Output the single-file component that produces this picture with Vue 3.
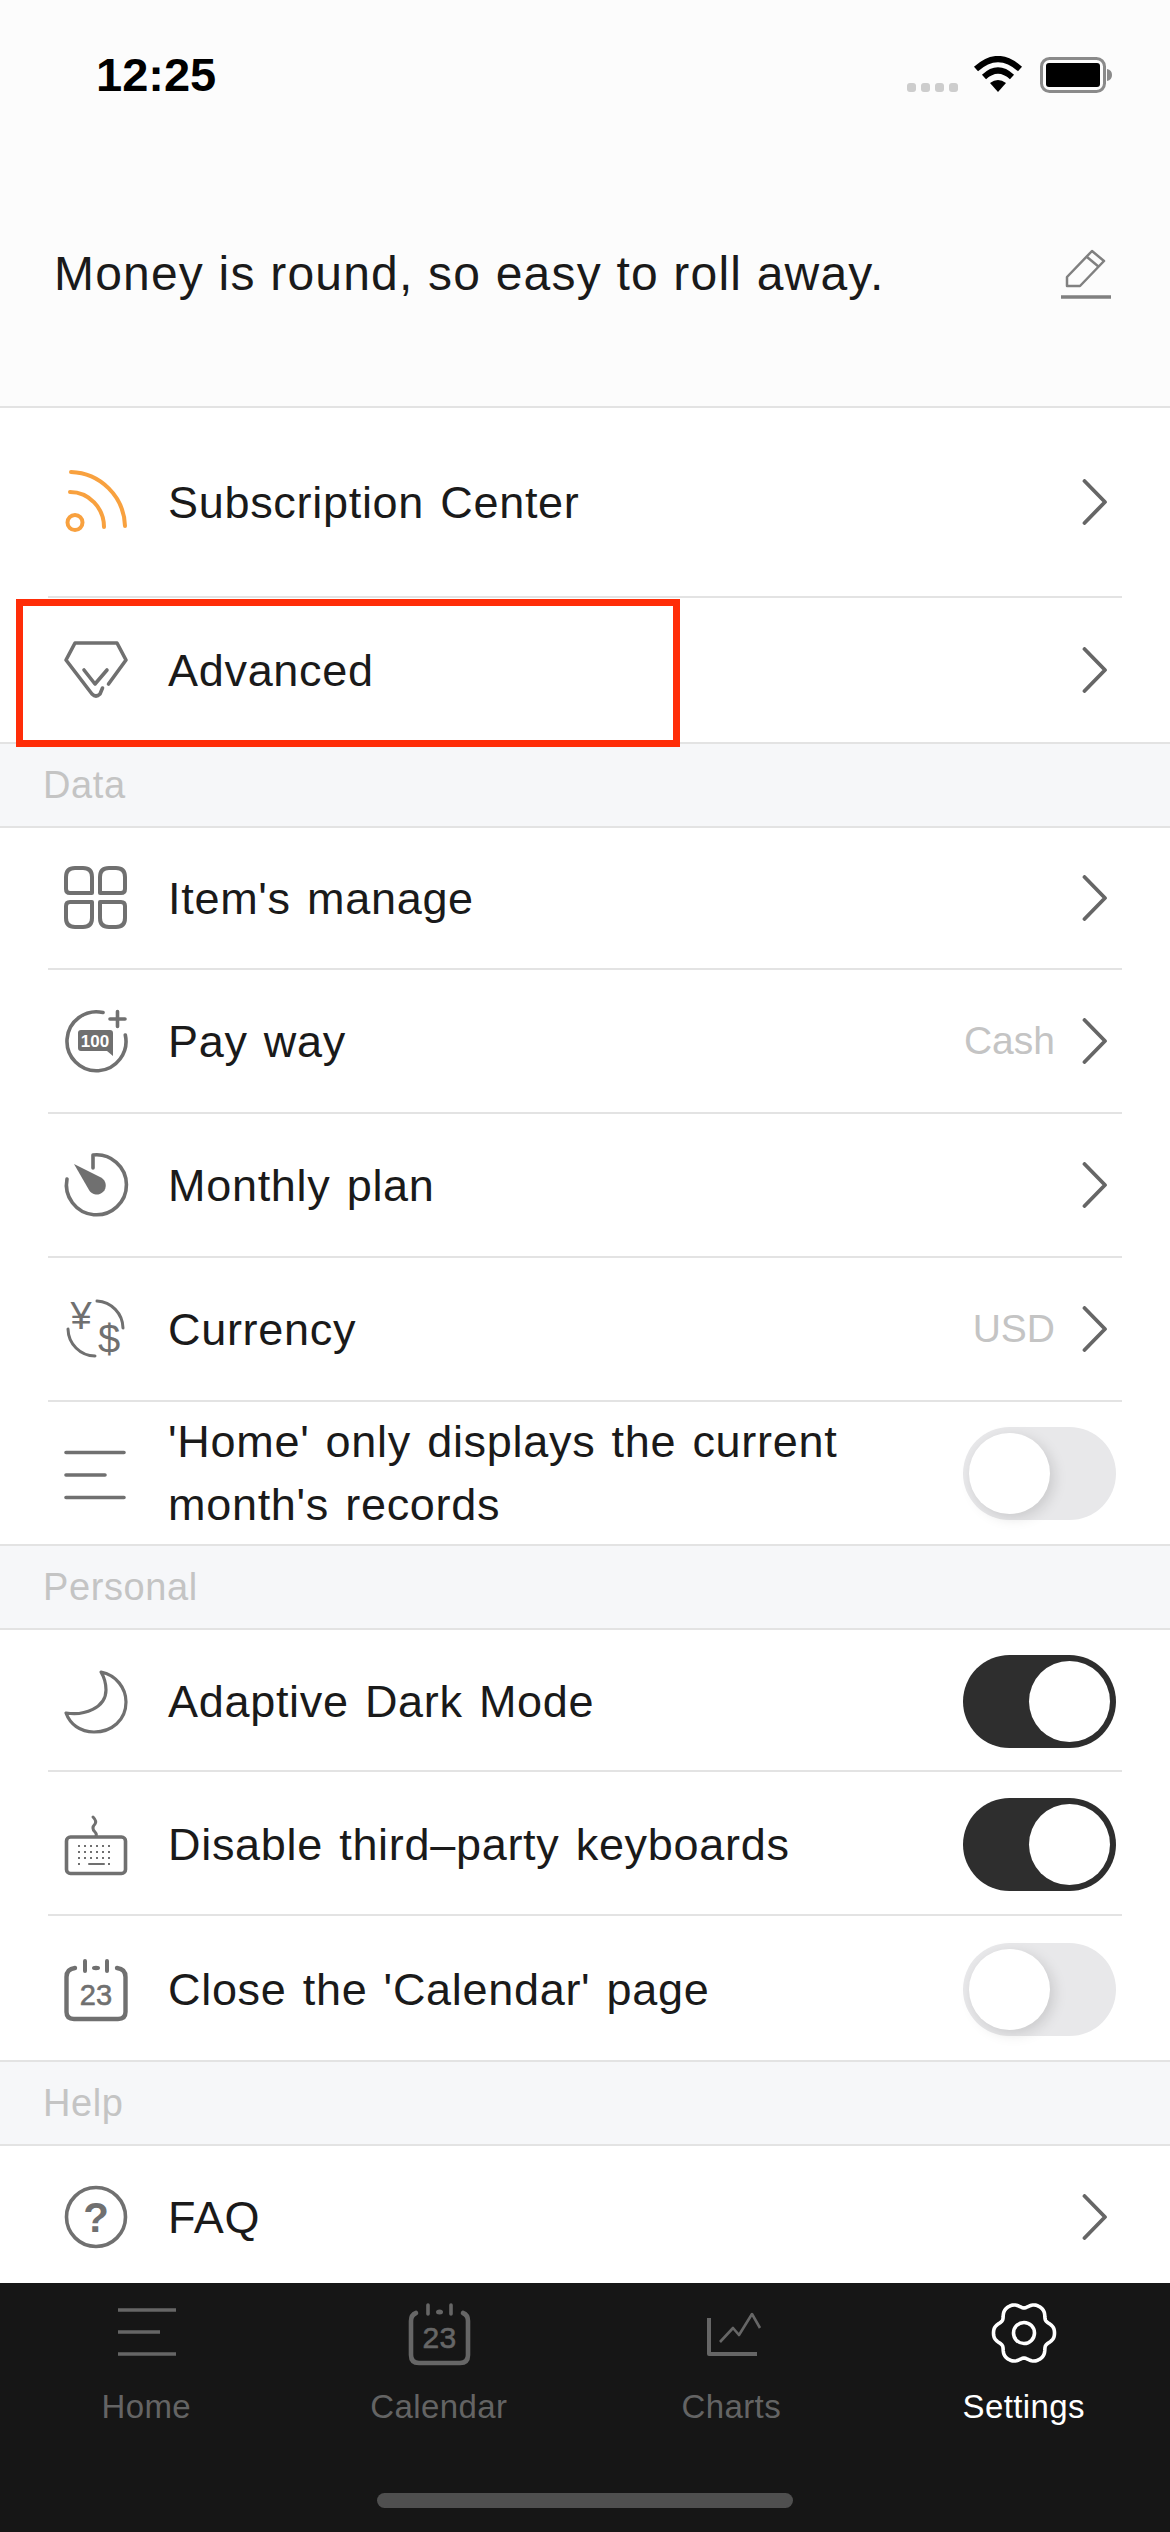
<template>
  <div class="page">
    <header class="top">
      <div class="status">
        <span class="time">12:25</span>
        <div class="status-icons">
          <div class="signal"><i></i><i></i><i></i><i></i></div>
          <svg class="wifi" width="50" height="36" viewBox="0 0 50 36">
            <path d="M3 13 Q25 -7 47 13" fill="none" stroke="#000" stroke-width="6" />
            <path d="M11 21 Q25 8 39 21" fill="none" stroke="#000" stroke-width="6" />
            <path d="M17 27 Q25 21 33 27 L25 36 Z" fill="#000" />
          </svg>
          <svg class="battery" width="74" height="36" viewBox="0 0 74 36">
            <rect x="1.5" y="1.5" width="63" height="33" rx="8" fill="none" stroke="#8a8a8a" stroke-width="3" />
            <rect x="6" y="6" width="54" height="24" rx="3" fill="#000" />
            <path d="M67 12 Q72 13 72 18 Q72 23 67 24 Z" fill="#8a8a8a" />
          </svg>
        </div>
      </div>
      <div class="motto">
        <span>Money is round, so easy to roll away.</span>
        <svg width="50" height="52" viewBox="0 0 50 52" fill="none" stroke="#808080">
          <path d="M6 37 V28 L31 2 L43 12 L19 37 Z" stroke-width="2.5" stroke-linejoin="round" />
          <path d="M26 8 L38 18" stroke-width="2.5" />
          <path d="M0 48 H50" stroke-width="3.5" />
        </svg>
      </div>
    </header>

    <main class="list">
      <section v-for="group in groups" :key="group.title" :class="group.cls">
        <h4 v-if="group.title" class="group-title">{{ group.title }}</h4>
        <div class="group">
          <div
            v-for="row in group.rows"
            :key="row.label"
            class="row"
            :class="row.cls"
          >
            <svg class="icon" width="64" height="64" viewBox="0 0 64 64" fill="none" stroke="#707070" stroke-width="3.6" stroke-linecap="round" stroke-linejoin="round">
              <template v-if="row.icon === 'rss'">
                <g stroke="#f8a13f" stroke-width="4">
                  <circle cx="11" cy="52.5" r="7.5" />
                  <path d="M6 22 C25 22 40 38 40 57" />
                  <path d="M7 2 C36 3 60 26 61 56" />
                </g>
              </template>
              <template v-else-if="row.icon === 'gem'">
                <path d="M44.5 46 L62 22 L53 5 H11 L2 22 L28 56 Q32 60 36 56 L38.5 50" />
                <path d="M20 32 L31 46 L43 32" />
              </template>
              <template v-else-if="row.icon === 'grid'">
                <path d="M11 2 H19 Q28 2 28 11 V27 H6 Q2 27 2 23 V11 Q2 2 11 2 Z" stroke-width="4" />
                <path d="M45 2 H52 Q61 2 61 11 V23 Q61 27 57 27 H36 V11 Q36 2 45 2 Z" stroke-width="4" />
                <path d="M6 36 H28 V52 Q28 61 19 61 H11 Q2 61 2 52 V40 Q2 36 6 36 Z" stroke-width="4" />
                <path d="M36 36 H57 Q61 36 61 40 V52 Q61 61 52 61 H45 Q36 61 36 52 Z" stroke-width="4" />
              </template>
              <template v-else-if="row.icon === 'pay'">
                <path d="M39 3.500 A29.500 29.500 0 1 0 61.300 26" />
                <path d="M46 10 H61 M53.500 2.500 V17.500" />
                <path d="M17 21 H46 Q49 21 49 24 V47 L43 42 H17 Q14 42 14 39 V24 Q14 21 17 21 Z" fill="#707070" stroke="none" />
                <text x="31" y="37.500" class="bill">100</text>
              </template>
              <template v-else-if="row.icon === 'plan'">
                <path d="M29 15 V2 A30 30 0 1 1 3 26" />
                <path d="M10 11 L37 24.500 A9 9 0 1 1 25 37 Z" fill="#707070" stroke="none" />
              </template>
              <template v-else-if="row.icon === 'currency'">
                <path d="M33 4 A27.500 27.500 0 0 1 59 31" stroke-width="3" />
                <path d="M4 32 A27.500 27.500 0 0 0 31 59" stroke-width="3" />
                <text x="17" y="32" class="money">¥</text>
                <text x="45" y="56" class="money big">$</text>
              </template>
              <template v-else-if="row.icon === 'lines'">
                <path d="M2 11.500 H60 M2 34 H41 M2 56.500 H60" />
              </template>
              <template v-else-if="row.icon === 'moon'">
                <path d="M37 2 C52 5 62 18 62 32 C62 50 48 62 30 62 C16 62 6 54 2 43 C20 46 42 38 42 20 C42 13 40 7 37 2 Z" stroke-width="3.2" />
              </template>
              <template v-else-if="row.icon === 'keyboard'">
                <rect x="2.500" y="24" width="59" height="36.500" rx="4" stroke-width="3.6" />
                <path d="M29 4 Q33 8 31 11 Q27 15 31 19 Q33 21 32 23" stroke-width="3" />
                <path d="M14 33 H50 M14 39 H50 M14 45 H50" stroke-width="1.8" stroke-dasharray="2 4" stroke-linecap="butt" />
                <path d="M14 51 H20 M44 51 H50" stroke-width="1.8" stroke-dasharray="2 4" stroke-linecap="butt" />
                <path d="M25 51 H40" stroke-width="2" />
              </template>
              <template v-else-if="row.icon === 'calendar'">
                <path d="M11 10 Q2.500 11 2.500 19 V54 Q2.500 61 10 61 H54 Q61.500 61 61.500 54 V19 Q61.500 11 53 10" stroke-width="4.4" />
                <path d="M21 3 V13 M43 3 V13" stroke-width="4" />
                <ellipse cx="32" cy="10" rx="4" ry="2.200" fill="#707070" stroke="none" />
                <text x="32" y="47" class="day">23</text>
              </template>
              <template v-else-if="row.icon === 'help'">
                <circle cx="32" cy="32" r="29.500" />
                <text x="32" y="47" class="qmark">?</text>
              </template>
            </svg>

            <span class="label">{{ row.label }}</span>
            <span v-if="row.value" class="value">{{ row.value }}</span>

            <div v-if="row.toggle !== undefined" class="toggle" :class="{ on: row.toggle }"><i></i></div>
            <svg v-else class="chevron" width="28" height="46" viewBox="0 0 28 46" fill="none" stroke="#666" stroke-width="3.8" stroke-linecap="round" stroke-linejoin="round">
              <path d="M4.500 2 L25 23 L4.500 44" />
            </svg>

            <div v-if="row.marked" class="mark"></div>
          </div>
        </div>
      </section>
    </main>

    <footer class="tabs">
      <div class="tab-row">
        <div class="tab">
          <svg width="66" height="66" viewBox="0 0 66 66" fill="none" stroke="#666" stroke-width="3.6">
            <path d="M5 10 H63 M5 32 H47 M5 54 H63" />
          </svg>
          <span>Home</span>
        </div>
        <div class="tab">
          <svg width="66" height="66" viewBox="0 0 66 66" fill="none" stroke="#666" stroke-linecap="round" stroke-linejoin="round">
            <path d="M10 13 Q5 15 5 21 V55 Q5 63 13 63 H54 Q62 63 62 55 V21 Q62 15 57 13" stroke-width="4.6" />
            <path d="M22 5 V14 M45 5 V14" stroke-width="3.6" />
            <ellipse cx="33.500" cy="12" rx="3.500" ry="2.500" fill="#666" stroke="none" />
            <text x="33.500" y="48" class="day tab-day">23</text>
          </svg>
          <span>Calendar</span>
        </div>
        <div class="tab">
          <svg width="66" height="66" viewBox="0 0 66 66" fill="none" stroke="#666" stroke-linejoin="round">
            <path d="M11 18 V54 H59" stroke-width="4" />
            <path d="M22 42 L35 28 L41 35 L54 14 L62 28" stroke-width="2.6" />
          </svg>
          <span>Charts</span>
        </div>
        <div class="tab active">
          <svg width="66" height="66" viewBox="0 0 66 66" fill="none" stroke="#fff" stroke-width="3.6">
            <path :d="gearPath" stroke-linejoin="round" />
            <circle cx="33" cy="33" r="10.500" />
          </svg>
          <span>Settings</span>
        </div>
      </div>
      <div class="home-bar"></div>
    </footer>
  </div>
</template>

<script setup>
const groups = [
  {
    title: '',
    rows: [
      { label: 'Subscription Center', icon: 'rss', cls: 'first-row' },
      { label: 'Advanced', icon: 'gem', cls: 'tall', marked: true }
    ]
  },
  {
    title: 'Data',
    rows: [
      { label: "Item's manage", icon: 'grid' },
      { label: 'Pay way', icon: 'pay', value: 'Cash' },
      { label: 'Monthly plan', icon: 'plan' },
      { label: 'Currency', icon: 'currency', value: 'USD' },
      { label: "'Home' only displays the current month's records", icon: 'lines', toggle: false }
    ]
  },
  {
    title: 'Personal',
    cls: 'personal',
    rows: [
      { label: 'Adaptive Dark Mode', icon: 'moon', toggle: true },
      { label: 'Disable third–party keyboards', icon: 'keyboard', toggle: true },
      { label: "Close the 'Calendar' page", icon: 'calendar', toggle: false, cls: 'tall' }
    ]
  },
  {
    title: 'Help',
    rows: [{ label: 'FAQ', icon: 'help' }]
  }
]

// six lobes round the settings gear, the second harmonic sharpens the notches
const points = []
for (let i = 0; i < 144; i++) {
  const a = (i / 144) * Math.PI * 2
  const r = 28.25 + 2.75 * Math.cos(6 * a) - 0.5 * Math.cos(12 * a)
  points.push((33 + r * Math.cos(a)).toFixed(2) + ' ' + (33 + r * Math.sin(a)).toFixed(2))
}
const gearPath = 'M' + points.join(' L') + ' Z'
</script>

<style>
html,
body {
  margin: 0;
  background: #fff;
}
</style>

<style scoped>
.page {
  width: 1170px;
  height: 2532px;
  display: flex;
  flex-direction: column;
  overflow: hidden;
  background: #fff;
  color: #1a1a1a;
  font-family: "Liberation Sans", Arial, sans-serif;
}

.top {
  height: 408px;
  box-sizing: border-box;
  flex: none;
  background: #fcfcfc;
  border-bottom: 2px solid #e3e3e3;
}

.status {
  height: 149px;
  box-sizing: border-box;
  padding: 0 56px 0 96px;
  display: flex;
  align-items: center;
  justify-content: space-between;
}

.time {
  font-size: 47px;
  font-weight: 700;
  color: #000;
}

.status-icons {
  display: flex;
  align-items: center;
  gap: 15px;
}

.signal {
  display: flex;
  gap: 5px;
  align-self: flex-end;
  margin-bottom: 1px;
}

.signal i {
  width: 9px;
  height: 9px;
  border-radius: 3px;
  background: #cdcdcd;
}

.wifi {
  margin-top: -2px;
}

.battery {
  margin-left: 2px;
}

.motto {
  height: 252px;
  padding: 0 59px 0 54px;
  display: flex;
  align-items: center;
  justify-content: space-between;
  font-size: 48px;
  letter-spacing: 1.2px;
}

.motto span {
  padding-bottom: 4px;
}

.list {
  flex: 1;
  min-height: 0;
  overflow: hidden;
}

.group-title {
  height: 86px;
  box-sizing: border-box;
  margin: 0;
  padding-left: 43px;
  background: #f6f7f9;
  border-top: 2px solid #e3e3e3;
  border-bottom: 2px solid #e3e3e3;
  display: flex;
  align-items: center;
  font-size: 38px;
  font-weight: 400;
  letter-spacing: 0.6px;
  color: #c4c4c4;
}

.row {
  position: relative;
  height: 144px;
  box-sizing: border-box;
  margin: 0 48px;
  padding: 0 6px 0 16px;
  display: flex;
  align-items: center;
  border-bottom: 2px solid #e3e3e3;
}

.row:first-child {
  height: 142px;
}

.row:last-child {
  height: 142px;
  border-bottom: none;
}

.row.first-row {
  height: 190px;
}

.row.tall {
  height: 144px;
}

.personal .row {
  padding-top: 3px;
}

.icon {
  flex: none;
  margin-right: 40px;
  overflow: visible;
}

.label {
  flex: 1;
  min-width: 0;
  font-size: 45px;
  line-height: 63px;
  letter-spacing: 0.7px;
  word-spacing: 3px;
  padding-right: 70px;
}

.value {
  font-size: 39px;
  color: #c4c4c4;
  margin-right: 25px;
}

.chevron {
  flex: none;
  margin-right: 8px;
}

.toggle {
  flex: none;
  width: 153px;
  height: 93px;
  box-sizing: border-box;
  padding: 6px;
  border-radius: 47px;
  background: #e8e8ea;
}

.toggle i {
  display: block;
  width: 81px;
  height: 81px;
  border-radius: 50%;
  background: #fff;
  box-shadow: 4px 4px 14px rgba(0, 0, 0, 0.13);
}

.toggle.on {
  display: flex;
  justify-content: flex-end;
  background: #2e2e2e;
}

.toggle.on i {
  box-shadow: none;
}

.mark {
  position: absolute;
  left: -32px;
  top: 1px;
  width: 664px;
  height: 148px;
  box-sizing: border-box;
  border: 7px solid #ff2d08;
  z-index: 1;
}

.bill {
  font-size: 17px;
  font-weight: 700;
  text-anchor: middle;
  fill: #fff;
  stroke: none;
}

.money {
  font-size: 38px;
  text-anchor: middle;
  fill: #707070;
  stroke: none;
}

.money.big {
  font-size: 40px;
}

.day {
  font-size: 29px;
  text-anchor: middle;
  fill: #707070;
  stroke: #707070;
  stroke-width: 0.6px;
}

.day.tab-day {
  font-size: 30px;
  fill: #666;
  stroke: #666;
}

.qmark {
  font-size: 42px;
  font-weight: 700;
  text-anchor: middle;
  fill: #707070;
  stroke: none;
}

.tabs {
  flex: none;
  height: 249px;
  box-sizing: border-box;
  padding-top: 17px;
  background: #161616;
}

.tab-row {
  display: grid;
  grid-template-columns: repeat(4, 1fr);
}

.tab {
  display: flex;
  flex-direction: column;
  align-items: center;
  gap: 21px;
  font-size: 33px;
  line-height: 40px;
  letter-spacing: 0.4px;
  color: #646464;
}

.tab.active {
  color: #fff;
}

.home-bar {
  width: 416px;
  height: 15px;
  margin: 66px auto 0;
  border-radius: 8px;
  background: #4f4f4f;
}
</style>
